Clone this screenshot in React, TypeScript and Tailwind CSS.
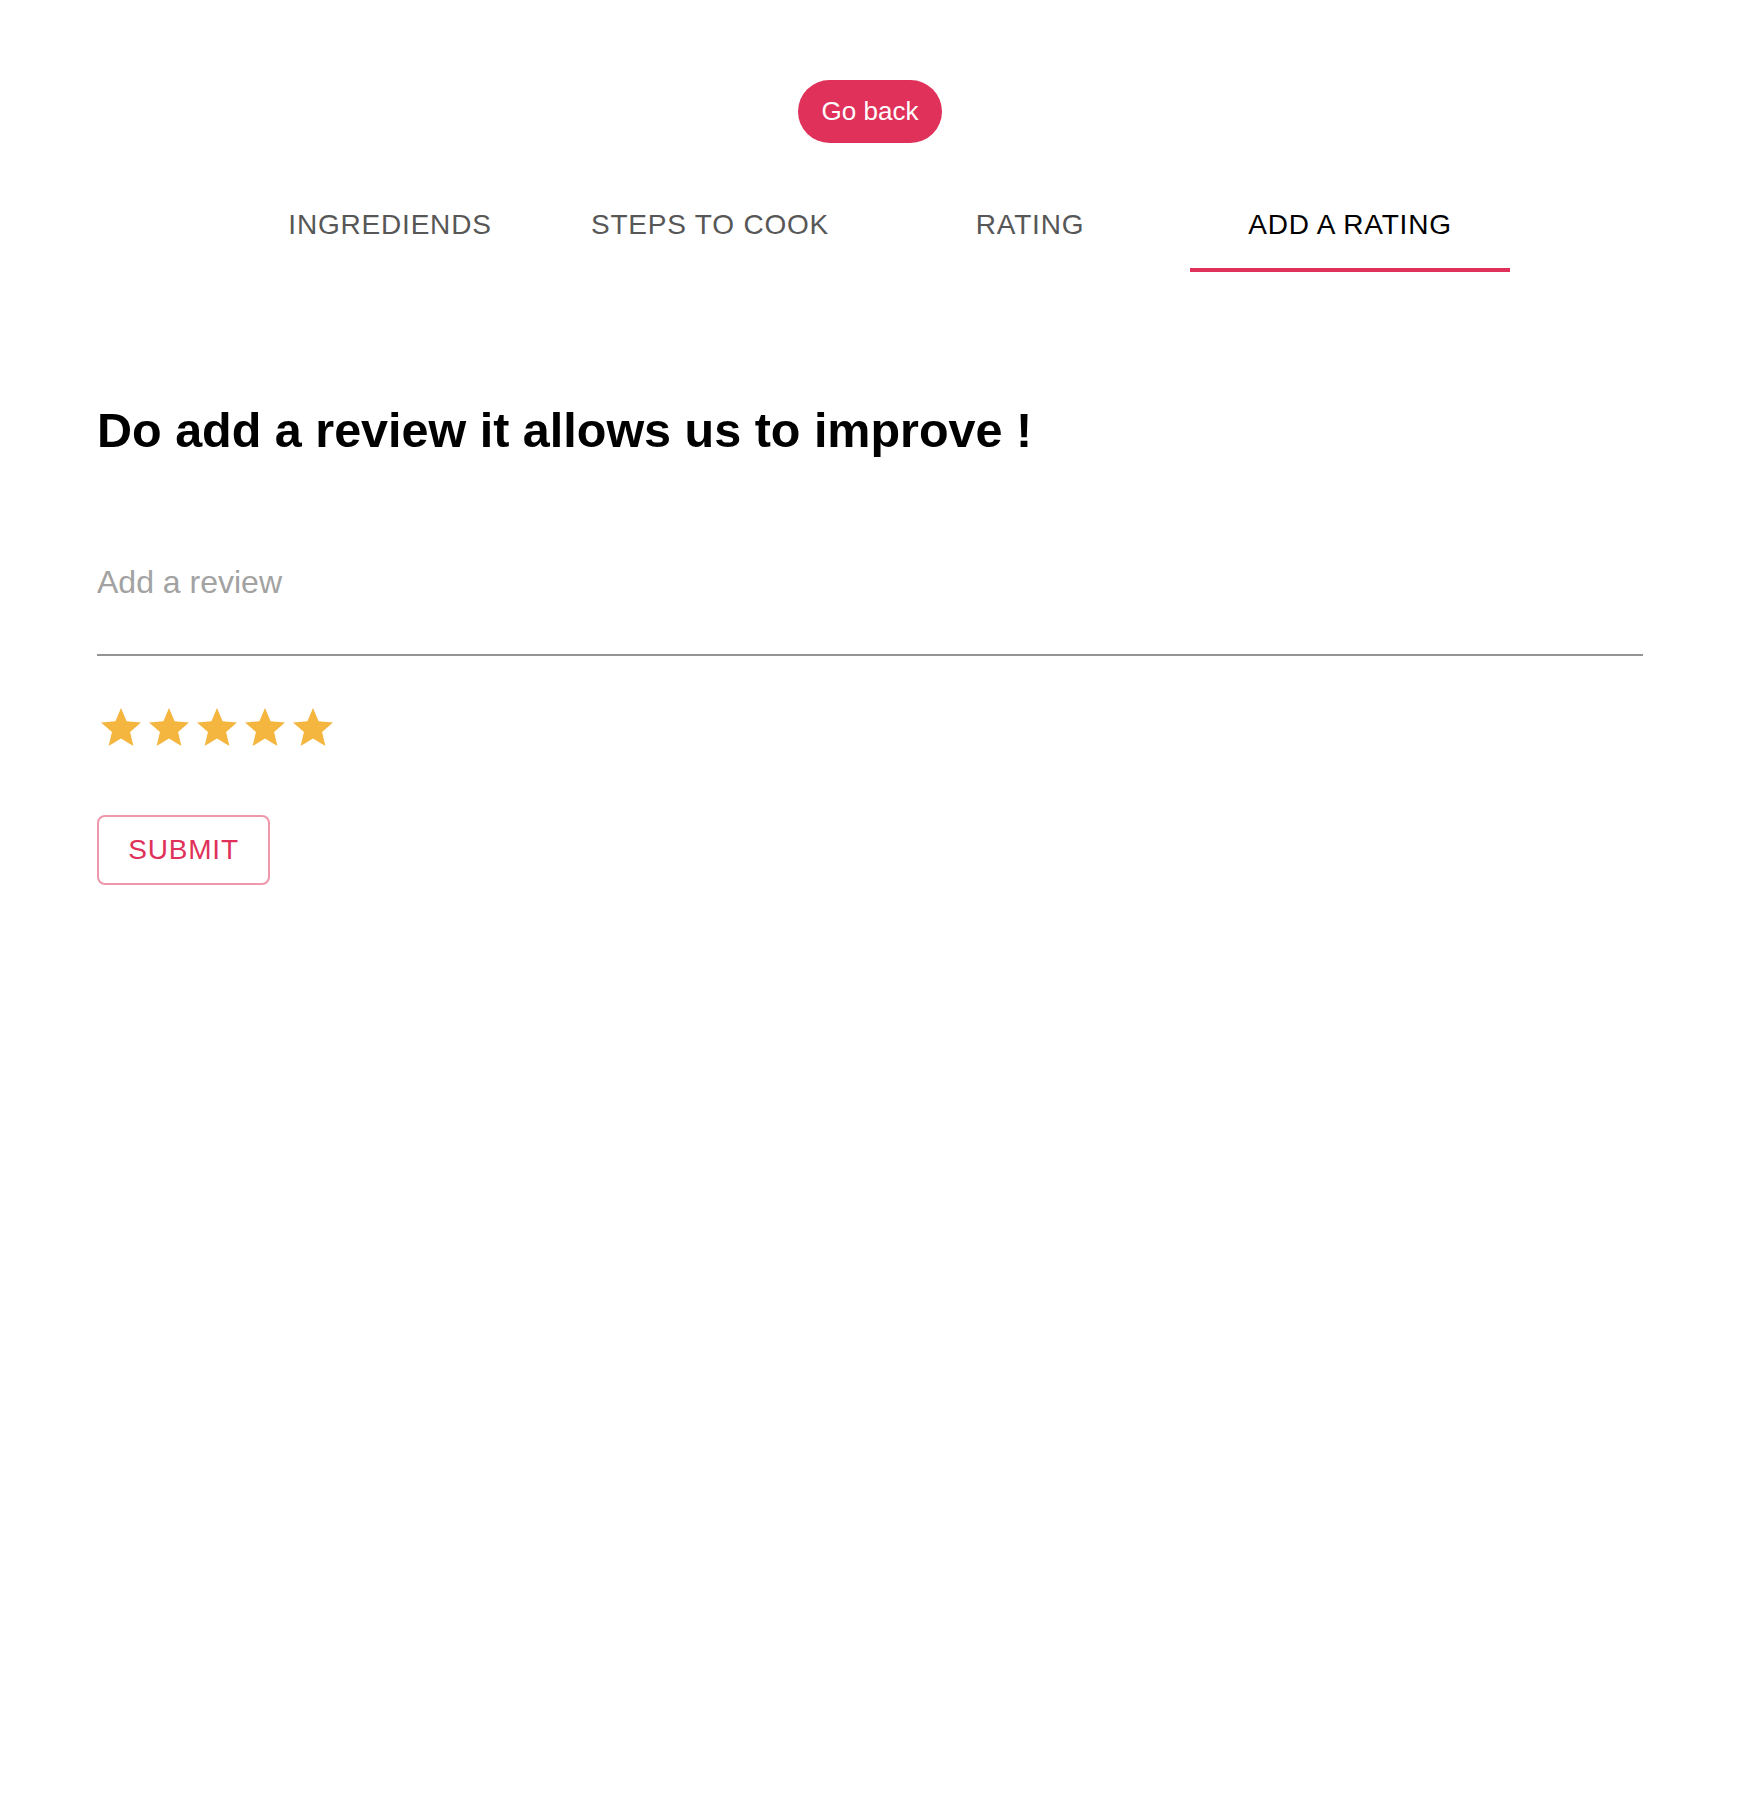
import React from 'react';

const tabs = ['INGREDIENDS', 'STEPS TO COOK', 'RATING', 'ADD A RATING'];

const StarIcon = () => (
  <svg viewBox="0 0 24 24" className="w-[48px] h-[48px] fill-[#f5b640]">
    <path d="M12 17.27 18.18 21l-1.64-7.03L22 9.24l-7.19-.61L12 2 9.19 8.63 2 9.24l5.46 4.73L5.82 21z" />
  </svg>
);

const App = () => {
  const active = 3;

  return (
    <div className="min-h-screen bg-white font-['Liberation_Sans',Arial,sans-serif]">
      {/* Back button */}
      <div className="flex justify-center pt-[80px] pr-[2px]">
        <button className="w-[144px] h-[63px] rounded-full bg-[#e0315a] text-white text-[26px] flex items-center justify-center">
          Go back
        </button>
      </div>

      {/* Tabs */}
      <div className="flex justify-center pr-[2px] mt-[33px]">
        <div className="w-[1280px] flex">
          {tabs.map((tab, i) => (
            <div
              key={tab}
              className={
                i === active
                  ? 'flex-1 h-[96px] pt-[4px] border-b-4 border-[#e0315a] flex items-center justify-center text-[28px] leading-[35px] tracking-[0.8px] text-black'
                  : 'flex-1 h-[96px] pt-[4px] border-b-4 border-transparent flex items-center justify-center text-[28px] leading-[35px] tracking-[0.8px] text-[#575757]'
              }
            >
              {tab}
            </div>
          ))}
        </div>
      </div>

      {/* Add a rating form */}
      <div className="pl-[97px] pr-[99px]">
        <h2 className="mt-[134px] text-[48.5px] leading-[48px] font-bold text-black">
          Do add a review it allows us to improve !
        </h2>

        <textarea
          rows={2}
          placeholder="Add a review"
          className="mt-[105px] block w-full resize-none outline-none border-b-2 border-[#949494] pb-[3px] text-[32px] leading-[46px] text-black placeholder:text-[#a2a2a2]"
        />

        <div className="mt-[48px] flex">
          {[0, 1, 2, 3, 4].map((i) => (
            <StarIcon key={i} />
          ))}
        </div>

        <button className="mt-[63px] w-[173px] h-[70px] rounded-[8px] border-2 border-[#e0315a80] text-[#e0315a] text-[28px] tracking-[0.8px] flex items-center justify-center">
          SUBMIT
        </button>
      </div>
    </div>
  );
};

export default App;
